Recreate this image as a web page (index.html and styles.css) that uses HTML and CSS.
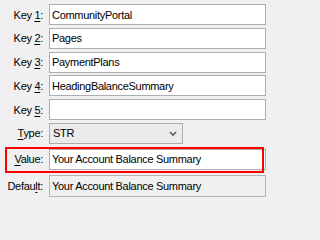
FILE: index.html
```html
<!DOCTYPE html>
<html>
<head>
<meta charset="utf-8">
<link rel="stylesheet" href="styles.css">
</head>
<body>
<form class="form">
  <div class="row">
    <label class="lbl">Key <u>1</u>:</label>
    <input class="field" type="text" value="CommunityPortal">
  </div>
  <div class="row">
    <label class="lbl">Key <u>2</u>:</label>
    <input class="field" type="text" value="Pages">
  </div>
  <div class="row">
    <label class="lbl">Key <u>3</u>:</label>
    <input class="field" type="text" value="PaymentPlans">
  </div>
  <div class="row">
    <label class="lbl">Key <u>4</u>:</label>
    <input class="field" type="text" value="HeadingBalanceSummary">
  </div>
  <div class="row">
    <label class="lbl">Key <u>5</u>:</label>
    <input class="field" type="text" value="">
  </div>
  <div class="row">
    <label class="lbl"><u>T</u>ype:</label>
    <div class="combo">
      <span class="combo-text">STR</span>
      <svg class="chev" width="8" height="6" viewBox="0 0 8 6"><path d="M1 1 L4 4.2 L7 1" fill="none" stroke="#5a5a5a" stroke-width="1.6"/></svg>
    </div>
  </div>
  <div class="row row-value">
    <div class="highlight"></div>
    <label class="lbl"><u>V</u>alue:</label>
    <input class="field" type="text" value="Your Account Balance Summary">
  </div>
  <div class="row row-default">
    <label class="lbl">Defau<u>l</u>t:</label>
    <input class="field field-ro" type="text" value="Your Account Balance Summary" readonly>
  </div>
</form>
</body>
</html>
```
FILE: styles.css
```css
html, body {
  margin: 0;
  padding: 0;
  background: #f0f0f0;
}
body {
  width: 266px;
  height: 202px;
  overflow: hidden;
  font-family: "Liberation Sans", Arial, sans-serif;
  font-size: 11px;
  letter-spacing: -0.3px;
  color: #000;
}
.form {
  display: flex;
  flex-direction: column;
  padding-top: 4px;
}
.row {
  display: flex;
  align-items: center;
  height: 21px;
  margin-bottom: 2.8px;
  column-gap: 6px;
  position: relative;
}
.lbl {
  width: 43px;
  flex: none;
  text-align: right;
  white-space: nowrap;
}
.lbl u {
  text-decoration-thickness: 1px;
  text-underline-offset: 2px;
}
.field {
  box-sizing: border-box;
  width: 217px;
  height: 21px;
  margin: 0;
  border: 1px solid #abadb3;
  background: #fff;
  padding: 0 2px;
  font-family: inherit;
  font-size: 11px;
  letter-spacing: -0.3px;
  color: #000;
  outline: none;
}
.field-ro {
  background: #f0f0f0;
  border-color: #b5b5b5;
  height: 22px;
}
.combo {
  box-sizing: border-box;
  width: 134px;
  height: 21px;
  border: 1px solid #adadad;
  background: #ebebeb;
  display: flex;
  align-items: center;
  justify-content: space-between;
  padding: 0 5px 0 3px;
}
.chev {
  display: block;
  margin-top: 1px;
}
.row-value {
  margin-top: 2.2px;
  margin-bottom: 6px;
}
.highlight {
  position: absolute;
  left: 5px;
  top: -2px;
  width: 259px;
  height: 26px;
  box-sizing: border-box;
  border: 2px solid #f00;
  pointer-events: none;
}
```
